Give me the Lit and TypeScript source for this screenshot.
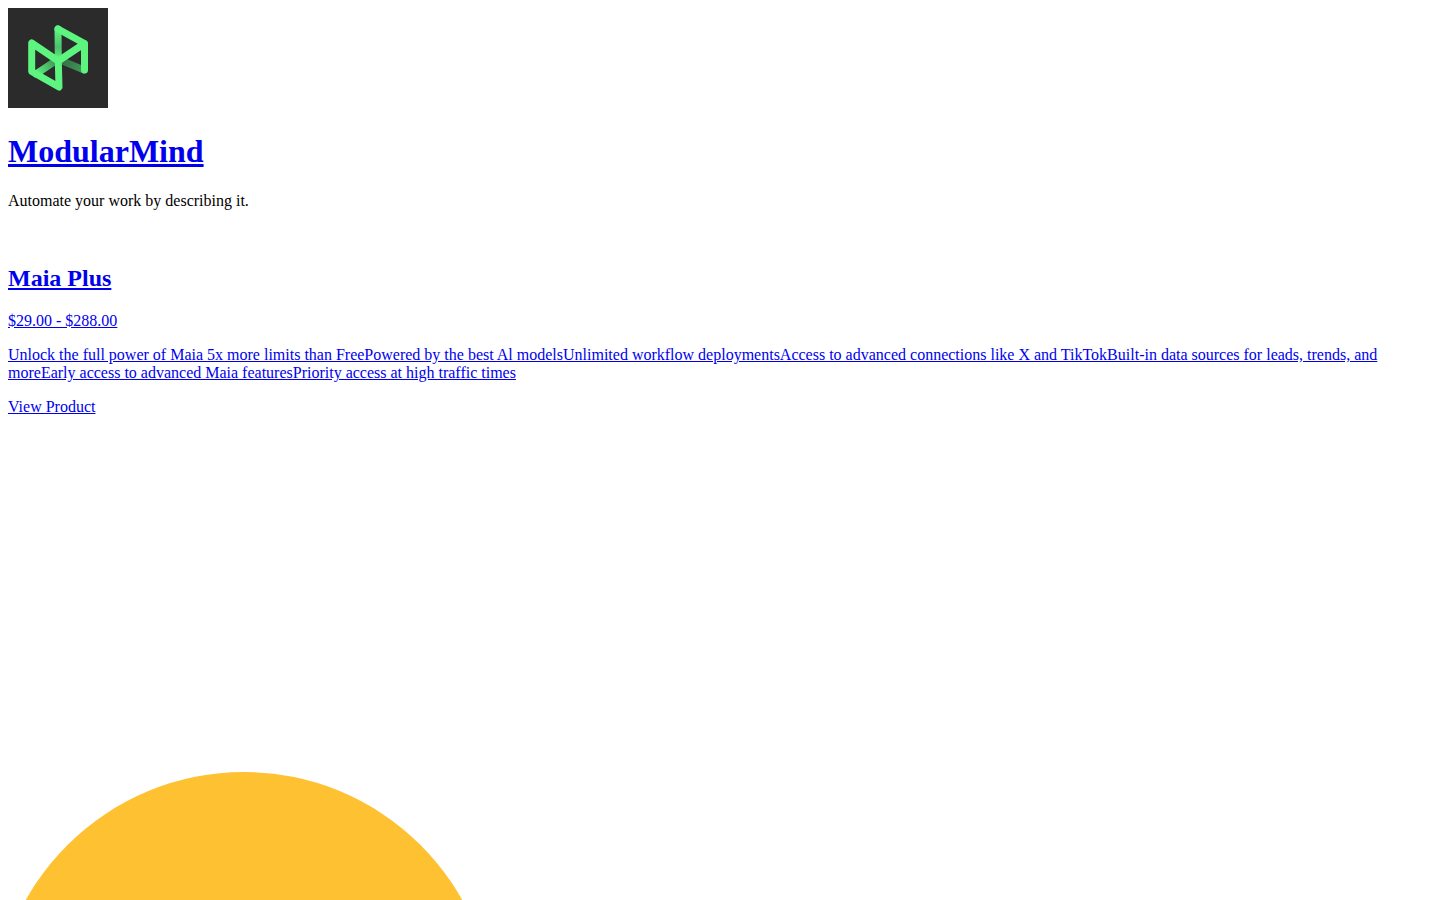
import { LitElement, html, css } from "lit";
import { customElement } from "lit/decorators.js";

@customElement("app-root")
export class AppRoot extends LitElement {
  static styles = css`
    :host {
      display: block;
      position: relative;
      height: 900px;
      overflow: hidden;
      box-sizing: border-box;
      padding: 8px;
      background: #fff;
      color: #000;
      font-family: "Liberation Serif", "Times New Roman", serif;
      font-size: 16px;
      line-height: normal;
    }
    a { color: #0000ee; text-decoration: underline; }
    .logo-line { display: block; height: 104px; }
    .logo { display: block; width: 100px; height: 100px; }
    .mark { filter: blur(0.4px); }
    h1 { font-size: 32px; font-weight: 700; margin: 21.44px 0; }
    h2 { font-size: 24px; font-weight: 700; margin: 19.92px 0; }
    p { margin: 16px 0; }
    .spacer { height: 19px; }
    .sun {
      position: absolute;
      left: -6px;
      top: 772px;
      width: 500px;
      height: 500px;
      border-radius: 50%;
      background: #fec132;
    }
  `;

  render() {
    const features = [
      "Unlock the full power of Maia 5x more limits than Free",
      "Powered by the best Al models",
      "Unlimited workflow deployments",
      "Access to advanced connections like X and TikTok",
      "Built-in data sources for leads, trends, and more",
      "Early access to advanced Maia features",
      "Priority access at high traffic times",
    ].join("");
    return html`
      <div class="logo-line">
        <svg class="logo" viewBox="0 0 100 100" aria-label="ModularMind logo">
          <defs>
            <linearGradient id="fadeA" gradientUnits="userSpaceOnUse" x1="76" y1="62" x2="52" y2="52">
              <stop offset="0" stop-color="#3f9a58" />
              <stop offset="1" stop-color="#356b45" />
            </linearGradient>
            <linearGradient id="fadeB" gradientUnits="userSpaceOnUse" x1="28" y1="66" x2="49" y2="52">
              <stop offset="0" stop-color="#5df580" />
              <stop offset="1" stop-color="#3f8a55" />
            </linearGradient>
            <linearGradient id="fadeC" gradientUnits="userSpaceOnUse" x1="50" y1="21" x2="50" y2="52">
              <stop offset="0" stop-color="#5df580" />
              <stop offset="0.6" stop-color="#4cc06c" />
              <stop offset="1" stop-color="#5df580" />
            </linearGradient>
          </defs>
          <rect width="100" height="100" fill="#2b2b2b" />
          <g class="mark" fill="none" stroke-width="7" stroke-linecap="round" stroke-linejoin="round">
            <path d="M76 62 L52 52" stroke="url(#fadeA)" />
            <path d="M28 66 L49 52" stroke="url(#fadeB)" />
            <path d="M50 21 L50.3 52" stroke="url(#fadeC)" />
            <path
              d="M50 21 L76.5 35.5 V62 M76.5 35.5 L50.3 53 L23.7 35 V63.5 L51 79 L50.3 53"
              stroke="#5df580"
            />
          </g>
        </svg>
      </div>
      <h1><a href="#">ModularMind</a></h1>
      <p>Automate your work by describing it.</p>
      <div class="spacer"></div>
      <h2><a href="#">Maia Plus</a></h2>
      <p><a href="#">$29.00 - $288.00</a></p>
      <p><a href="#">${features}</a></p>
      <p><a href="#">View Product</a></p>
      <div class="sun"></div>
    `;
  }
}
